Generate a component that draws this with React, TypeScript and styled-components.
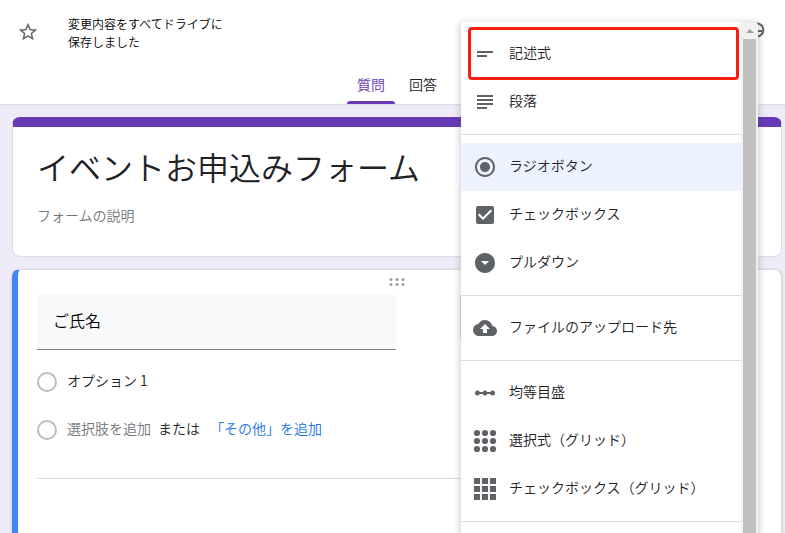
import React from 'react';
import styled, { createGlobalStyle, css } from 'styled-components';
import {
  MdStarBorder,
  MdShortText,
  MdSubject,
  MdRadioButtonChecked,
  MdCheckBox,
  MdArrowDropDownCircle,
  MdCloudUpload,
  MdLinearScale,
} from 'react-icons/md';

const GlobalStyle = createGlobalStyle`
  *, *::before, *::after { box-sizing: border-box; }
  html, body { margin: 0; height: 100%; overflow: hidden; }
  body {
    background: #f0ebf8;
    color: #202124;
    font-family: "Noto Sans CJK JP", "Noto Sans", sans-serif;
    font-size: 14px;
    font-weight: 350;
    line-height: 20px;
  }
  button, input { font: inherit; color: inherit; }
  button { border: 0; padding: 0; background: none; cursor: pointer; }
  input { min-width: 0; padding: 0; border: 0; outline: 0; background: none; }
`;

const Page = styled.div`
  position: relative;
  height: 100vh;
  overflow: hidden;
`;

const Header = styled.header`
  background: #fff;
  border-bottom: 1px solid #dadce0;
`;

const HeaderTop = styled.div`
  display: flex;
  align-items: flex-start;
  height: 64px;
  padding: 15px 19px 0 17px;
`;

const IconButton = styled.button<{ $size: number }>`
  display: flex;
  flex: none;
  color: #5f6368;
  margin-top: 6px;

  svg {
    width: ${(p) => p.$size}px;
    height: ${(p) => p.$size}px;
  }
`;

const SaveStatus = styled.p`
  flex: none;
  width: 160px;
  margin: 0 auto 0 29px;
  color: #000;
  font-size: 12px;
  line-height: 18px;
`;

const Tabs = styled.nav`
  display: flex;
  justify-content: center;
  gap: 4px;
  height: 40px;
  padding-left: 9px;
`;

const Tab = styled.button<{ $active?: boolean }>`
  display: flex;
  flex-direction: column;
  justify-content: space-between;
  padding-top: 10px;
  color: ${(p) => (p.$active ? '#673ab7' : '#202124')};

  span { padding: 0 10px; }

  &::after {
    content: '';
    width: 100%;
    height: 3px;
    border-radius: 3px 3px 0 0;
    background: ${(p) => (p.$active ? '#673ab7' : 'transparent')};
  }
`;

const Main = styled.main`
  display: flex;
  flex-direction: column;
  gap: 12px;
  padding: 12px 3px 0 12px;
`;

const Card = styled.section`
  border: 1px solid #dadce0;
  border-radius: 8px;
  background: #fff;
`;

const TitleCard = styled(Card)`
  display: flex;
  flex-direction: column;
  gap: 15px;
  border-top: 10px solid #673ab7;
  padding: 15px 24px 31px;
`;

const TitleInput = styled.input`
  height: 48px;
  font-size: 32px;
`;

const DescriptionInput = styled.input`
  height: 20px;
  color: #70757a;
`;

const QuestionCard = styled(Card)`
  border-left: 6px solid #4285f4;
  padding: 0 24px 120px 19px;
  box-shadow: 0 1px 3px rgba(60, 64, 67, 0.25);
`;

const DragHandle = styled.div`
  display: flex;
  justify-content: center;
  height: 24px;
  padding-top: 7px;
`;

const QuestionRow = styled.div`
  display: flex;
  justify-content: space-between;
  gap: 64px;
`;

const QuestionInput = styled.input`
  flex: 1;
  height: 56px;
  padding: 0 16px 4px;
  border-bottom: 1px solid #80868b;
  border-radius: 4px 4px 0 0;
  background: #f8f9fa;
  color: #000;
  font-size: 16px;
`;

const TypeBox = styled.div`
  flex: none;
  width: 297px;
  height: 48px;
  border: 1px solid #dadce0;
  border-radius: 4px;
`;

const Options = styled.div`
  display: flex;
  flex-direction: column;
  gap: 28px;
  padding: 22px 0 38px;
  border-bottom: 1px solid #dadce0;
`;

const OptionRow = styled.div`
  display: flex;
  align-items: center;
  height: 20px;

  > :not(:first-child) { padding-bottom: 4px; }
`;

const Radio = styled.input`
  appearance: none;
  flex: none;
  width: 20px;
  height: 20px;
  margin: 0 10px 0 0;
  border: 2px solid #bdbdbd;
  border-radius: 50%;
`;

const TextButton = styled.button<{ $tone: 'muted' | 'link' }>`
  color: ${(p) => (p.$tone === 'link' ? '#1a73e8' : '#70757a')};
`;

const Or = styled.span`
  padding: 0 10px 0 7px;
`;

const MenuPanel = styled.div`
  position: absolute;
  top: 22px;
  right: 27px;
  bottom: 0;
  display: flex;
  width: 297px;
  border-radius: 4px 4px 0 0;
  overflow: hidden;
  box-shadow: 0 2px 6px 2px rgba(60, 64, 67, 0.22);
`;

const MenuList = styled.ul`
  flex: 1;
  margin: 0;
  padding: 8px 0;
  background: #fff;
  list-style: none;
`;

const MenuItem = styled.button<{ $selected?: boolean }>`
  display: flex;
  align-items: center;
  gap: 12px;
  width: 100%;
  height: 48px;
  padding: 0 12px;
  text-align: left;
  ${(p) => p.$selected && css`background: #ecf3fe;`}

  span { padding-bottom: 4px; }

  svg {
    flex: none;
    width: 24px;
    height: 24px;
    color: #5f6368;
  }
`;

const Divider = styled.li`
  height: 1px;
  margin: 8px 0;
  background: #dadce0;
`;

const Scrollbar = styled.div`
  display: flex;
  flex: none;
  flex-direction: column;
  align-items: center;
  width: 17px;
  background: #f1f1f1;
`;

const ScrollArrow = styled.div`
  display: flex;
  align-items: center;
  height: 17px;
`;

const ScrollThumb = styled.div`
  flex: 1;
  width: 13px;
  background: #c1c1c1;
`;

const Highlight = styled.div`
  position: absolute;
  top: 27px;
  right: 46px;
  width: 271px;
  height: 53px;
  border: 3px solid #fb1c10;
  border-radius: 4px;
  pointer-events: none;
`;

const gridSteps = [4, 12, 20];

const CircleGridIcon = () => (
  <svg viewBox="0 0 24 24" fill="currentColor" aria-hidden="true">
    {gridSteps.map((y) => gridSteps.map((x) => <circle key={`${x}-${y}`} cx={x} cy={y} r="3.1" />))}
  </svg>
);

const SquareGridIcon = () => (
  <svg viewBox="0 0 24 24" fill="currentColor" aria-hidden="true">
    {gridSteps.map((y) =>
      gridSteps.map((x) => <rect key={`${x}-${y}`} x={x - 3} y={y - 3} width="6" height="6" />),
    )}
  </svg>
);

const DragDots = () => (
  <svg width="16" height="10" viewBox="0 0 16 10" fill="#9e9e9e" aria-hidden="true">
    {[2.5, 7.5].map((y) => [2, 8, 14].map((x) => <circle key={`${x}-${y}`} cx={x} cy={y} r="1.5" />))}
  </svg>
);

const ThemeIcon = () => (
  <svg viewBox="0 0 18 18" aria-hidden="true">
    <circle cx="9" cy="9" r="6.4" fill="none" stroke="currentColor" strokeWidth="2" />
    <path d="M9 10h5" stroke="currentColor" strokeWidth="2" />
    <circle cx="6" cy="7" r="1.2" fill="currentColor" />
  </svg>
);

const menuGroups = [
  [
    { label: '記述式', icon: <MdShortText /> },
    { label: '段落', icon: <MdSubject /> },
  ],
  [
    { label: 'ラジオボタン', icon: <MdRadioButtonChecked />, selected: true },
    { label: 'チェックボックス', icon: <MdCheckBox /> },
    { label: 'プルダウン', icon: <MdArrowDropDownCircle /> },
  ],
  [{ label: 'ファイルのアップロード先', icon: <MdCloudUpload /> }],
  [
    { label: '均等目盛', icon: <MdLinearScale /> },
    { label: '選択式（グリッド）', icon: <CircleGridIcon /> },
    { label: 'チェックボックス（グリッド）', icon: <SquareGridIcon /> },
  ],
];

export default function App() {
  return (
    <Page>
      <GlobalStyle />
      <Header>
        <HeaderTop>
          <IconButton $size={22} aria-label="スターを付ける"><MdStarBorder /></IconButton>
          <SaveStatus>変更内容をすべてドライブに保存しました</SaveStatus>
          <IconButton $size={18} aria-label="テーマをカスタマイズ"><ThemeIcon /></IconButton>
        </HeaderTop>
        <Tabs>
          <Tab $active><span>質問</span></Tab>
          <Tab><span>回答</span></Tab>
        </Tabs>
      </Header>

      <Main>
        <TitleCard>
          <TitleInput aria-label="フォームのタイトル" defaultValue="イベントお申込みフォーム" />
          <DescriptionInput aria-label="フォームの説明" defaultValue="フォームの説明" />
        </TitleCard>

        <QuestionCard>
          <DragHandle><DragDots /></DragHandle>
          <QuestionRow>
            <QuestionInput aria-label="質問" defaultValue="ご氏名" />
            <TypeBox />
          </QuestionRow>
          <Options>
            <OptionRow>
              <Radio type="radio" disabled aria-label="オプション 1" />
              <input aria-label="オプションのテキスト" defaultValue="オプション 1" />
            </OptionRow>
            <OptionRow>
              <Radio type="radio" disabled aria-label="選択肢を追加" />
              <TextButton $tone="muted">選択肢を追加</TextButton>
              <Or>または</Or>
              <TextButton $tone="link">「その他」を追加</TextButton>
            </OptionRow>
          </Options>
        </QuestionCard>
      </Main>

      <MenuPanel>
        <MenuList>
          {menuGroups.map((group, index) => (
            <React.Fragment key={index}>
              {group.map((item) => (
                <li key={item.label}>
                  <MenuItem $selected={'selected' in item}>
                    {item.icon}
                    <span>{item.label}</span>
                  </MenuItem>
                </li>
              ))}
              <Divider role="separator" />
            </React.Fragment>
          ))}
        </MenuList>
        <Scrollbar aria-hidden="true">
          <ScrollArrow>
            <svg width="8" height="4" viewBox="0 0 8 4" fill="#a3a3a3"><path d="M0 4 4 0l4 4z" /></svg>
          </ScrollArrow>
          <ScrollThumb />
        </Scrollbar>
      </MenuPanel>
      <Highlight />
    </Page>
  );
}
